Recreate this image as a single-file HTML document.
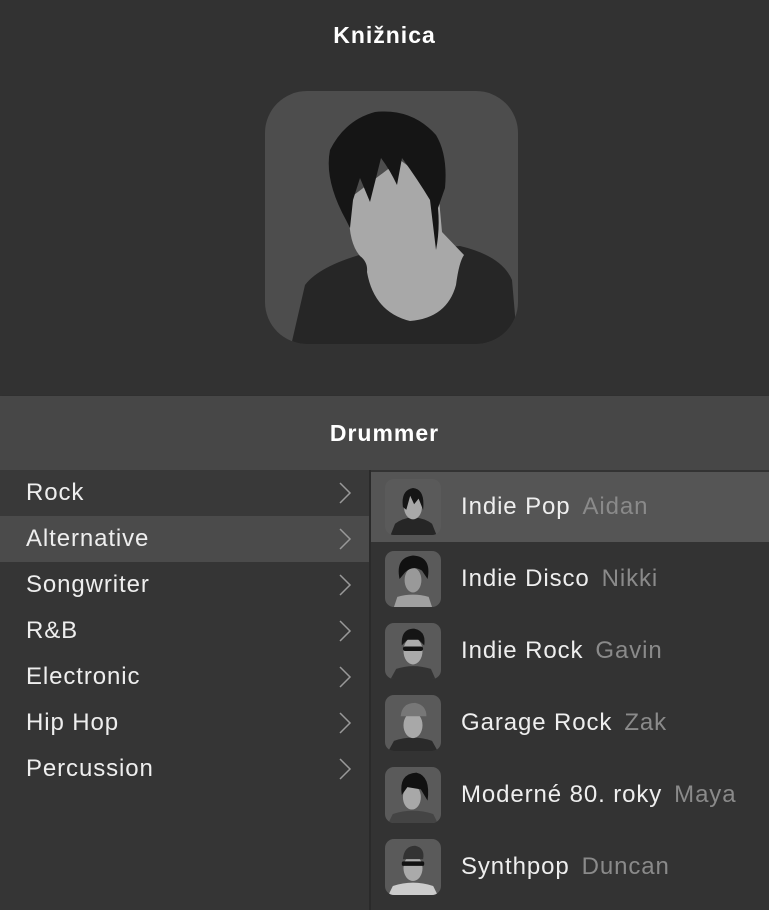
<!DOCTYPE html>
<html><head><meta charset="utf-8"><style>
*{margin:0;padding:0;box-sizing:border-box}
body{width:769px;height:910px;background:#323232;font-family:"Liberation Sans",sans-serif;position:relative;overflow:hidden;color:#fff}
.t{position:absolute;left:0;width:769px;text-align:center;font-weight:bold;font-size:23px;letter-spacing:1px}
#hdr{position:absolute;left:0;top:396px;width:769px;height:74px;background:#474747;box-shadow:0 2px 3px rgba(0,0,0,.4)}
#left{position:absolute;left:0;top:470px;width:369px;height:440px;background:#353535}
#div{position:absolute;left:369px;top:470px;width:2px;height:440px;background:#2a2a2a}
#right{position:absolute;left:371px;top:470px;width:398px;height:440px;background:#333}
.l{position:absolute;left:0;width:369px;height:46px;font-size:24px;letter-spacing:0.9px;line-height:46px;padding-left:26px;color:#eee}
.l svg{position:absolute;left:338px;top:11px}
.r{position:absolute;left:0;width:398px;height:70px}
.r .th{position:absolute;left:14px;top:7px;width:56px;height:56px;border-radius:9px;background:#5a5a5a;overflow:hidden}
.r .tx{position:absolute;left:90px;top:0;line-height:70px;font-size:24px;letter-spacing:0.9px;color:#eee;white-space:nowrap}
.r .tx span{color:#8a8a8a;margin-left:12px}
</style></head><body>
<div class="t" style="top:22px">Knižnica</div>
<svg style="position:absolute;left:265px;top:91px" width="253" height="253" viewBox="0 0 253 253">
<defs><clipPath id="c"><rect width="253" height="253" rx="42"/></clipPath></defs>
<g clip-path="url(#c)">
<rect width="253" height="253" fill="#4d4d4d"/>
<g transform="translate(-15,-11)">
<path d="M40,270 L55,205 Q70,185 120,172 L210,166 Q252,176 262,200 L268,270 Z" fill="#262626"/>
<path d="M100,118 Q96,160 110,176 Q118,182 117,192 Q124,232 160,241 Q197,238 206,205 Q209,182 214,175 L192,152 Q190,130 188,108 L150,80 Z" fill="#a8a8a8"/>
<path d="M96,140 Q74,100 80,70 Q95,40 125,32 Q162,28 186,55 Q198,75 195,108 L188,128 Q190,150 186,170 L180,120 Q168,100 152,78 L147,105 Q140,90 131,78 L120,122 L110,98 L103,120 L100,148 Z" fill="#151515"/>
</g></g></svg>
<div id="hdr"></div>
<div class="t" style="top:420px">Drummer</div>
<div id="left">
<div class="l" style="top:0;background:#393939">Rock<svg width="14" height="24"><path d="M2,2 L12,12 L2,22" stroke="#999" stroke-width="1.5" fill="none"/></svg></div>
<div class="l" style="top:46px;background:#4b4b4b">Alternative<svg width="14" height="24"><path d="M2,2 L12,12 L2,22" stroke="#999" stroke-width="1.5" fill="none"/></svg></div>
<div class="l" style="top:92px">Songwriter<svg width="14" height="24"><path d="M2,2 L12,12 L2,22" stroke="#999" stroke-width="1.5" fill="none"/></svg></div>
<div class="l" style="top:138px">R&amp;B<svg width="14" height="24"><path d="M2,2 L12,12 L2,22" stroke="#999" stroke-width="1.5" fill="none"/></svg></div>
<div class="l" style="top:184px">Electronic<svg width="14" height="24"><path d="M2,2 L12,12 L2,22" stroke="#999" stroke-width="1.5" fill="none"/></svg></div>
<div class="l" style="top:230px">Hip Hop<svg width="14" height="24"><path d="M2,2 L12,12 L2,22" stroke="#999" stroke-width="1.5" fill="none"/></svg></div>
<div class="l" style="top:276px">Percussion<svg width="14" height="24"><path d="M2,2 L12,12 L2,22" stroke="#999" stroke-width="1.5" fill="none"/></svg></div>
</div>
<div id="div"></div>
<div id="right">
<div class="r" style="top:2px;background:#555"><div class="th"><svg width="56" height="56" viewBox="0 0 100 100"><path d="M10,100 L18,80 Q30,70 50,68 Q72,70 84,80 L92,100Z" fill="#262626"/><ellipse cx="50" cy="50" rx="16" ry="22" fill="#a8a8a8"/><path d="M32,50 Q28,20 50,16 Q72,18 68,55 L60,35 L52,45 L45,30 L38,55Z" fill="#151515"/></svg></div><div class="tx">Indie Pop<span>Aidan</span></div></div>
<div class="r" style="top:74px"><div class="th"><svg width="56" height="56" viewBox="0 0 100 100"><path d="M16,100 L22,82 Q50,74 78,82 L84,100Z" fill="#a0a0a0"/><ellipse cx="50" cy="52" rx="15" ry="22" fill="#999"/><path d="M26,50 Q18,12 50,8 Q84,10 76,50 L66,35 Q50,25 36,38Z" fill="#111"/></svg></div><div class="tx">Indie Disco<span>Nikki</span></div></div>
<div class="r" style="top:146px"><div class="th"><svg width="56" height="56" viewBox="0 0 100 100"><path d="M10,100 L20,82 Q50,72 82,82 L90,100Z" fill="#333"/><ellipse cx="50" cy="50" rx="17" ry="24" fill="#aaa"/><path d="M30,40 Q28,10 52,10 Q74,14 70,40 L60,30 L40,30Z" fill="#151515"/><rect x="32" y="42" width="36" height="8" rx="4" fill="#111"/></svg></div><div class="tx">Indie Rock<span>Gavin</span></div></div>
<div class="r" style="top:218px"><div class="th"><svg width="56" height="56" viewBox="0 0 100 100"><path d="M6,100 L16,82 Q50,70 84,82 L94,100Z" fill="#2a2a2a"/><ellipse cx="50" cy="54" rx="17" ry="23" fill="#a8a8a8"/><path d="M28,38 Q30,14 54,14 Q74,18 74,38Z" fill="#777"/></svg></div><div class="tx">Garage Rock<span>Zak</span></div></div>
<div class="r" style="top:290px"><div class="th"><svg width="56" height="56" viewBox="0 0 100 100"><path d="M6,100 L14,84 Q50,72 86,84 L94,100Z" fill="#444"/><ellipse cx="48" cy="54" rx="16" ry="22" fill="#a8a8a8"/><path d="M30,50 Q24,12 56,10 Q82,16 76,60 L64,40 L40,36Z" fill="#111"/></svg></div><div class="tx">Moderné 80. roky<span>Maya</span></div></div>
<div class="r" style="top:362px"><div class="th"><svg width="56" height="56" viewBox="0 0 100 100"><path d="M6,100 L14,84 Q50,72 86,84 L94,100Z" fill="#ccc"/><ellipse cx="50" cy="52" rx="17" ry="23" fill="#aaa"/><path d="M32,36 Q34,12 54,12 Q72,16 68,36Z" fill="#333"/><rect x="30" y="40" width="40" height="8" rx="3" fill="#111"/></svg></div><div class="tx">Synthpop<span>Duncan</span></div></div>
</div>
</body></html>
